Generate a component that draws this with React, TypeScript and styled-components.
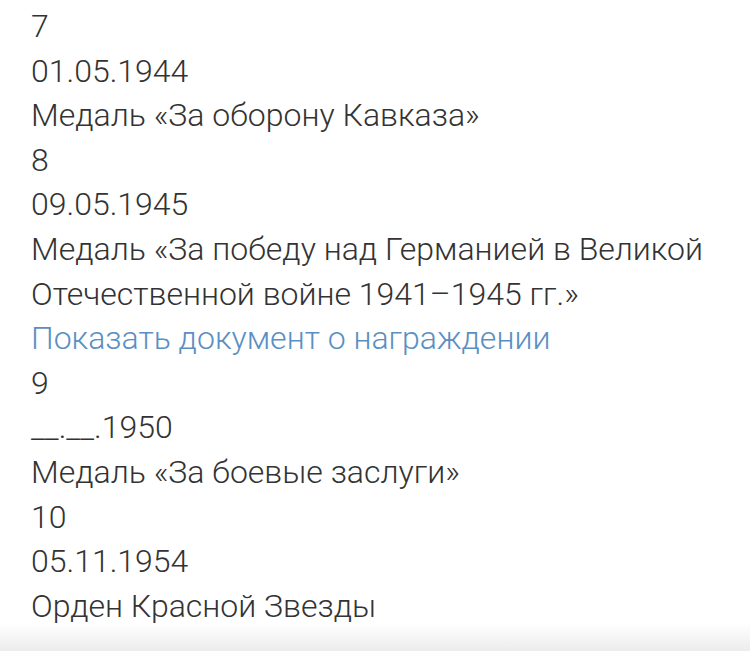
import styled, { createGlobalStyle } from "styled-components"

const GlobalStyle = createGlobalStyle`
    html, body {
        margin: 0;
        padding: 0;
        background: #fff;
    }
`

const Page = styled.main`
    width: 750px;
    height: 651px;
    overflow: hidden;
    position: relative;
    padding: 4px 31px 0;
    box-sizing: border-box;
    font-family: Roboto, "Liberation Sans", sans-serif;
    font-weight: 300;
    font-size: 32px;
    line-height: 44.6px;
    color: #333;
`

const Line = styled.div`
    white-space: pre-wrap;
`

const Link = styled.a`
    display: block;
    color: #5a8fc2;
    text-decoration: none;
`

const BottomShade = styled.div`
    position: absolute;
    left: 0;
    right: 0;
    bottom: 0;
    height: 28px;
    background: linear-gradient(180deg, rgba(255,255,255,0) 0%, #ececec 100%);
`

interface Award {
    num: string;
    date: string;
    name: string;
    link?: string;
}

const awards: Award[] = [
    { num: "7", date: "01.05.1944", name: "Медаль «За оборону Кавказа»" },
    { num: "8", date: "09.05.1945", name: "Медаль «За победу над Германией в Великой Отечественной войне 1941–1945 гг.»", link: "Показать документ о награждении" },
    { num: "9", date: "__.__.1950", name: "Медаль «За боевые заслуги»" },
    { num: "10", date: "05.11.1954", name: "Орден Красной Звезды" },
]

function App() {
    return (
        <>
            <GlobalStyle />
            <Page>
                {awards.map(a => (
                    <section key={a.num}>
                        <Line>{a.num}</Line>
                        <Line>{a.date}</Line>
                        <Line>{a.name}</Line>
                        {a.link && <Link href="#">{a.link}</Link>}
                    </section>
                ))}
                <BottomShade />
            </Page>
        </>
    )
}

export default App
